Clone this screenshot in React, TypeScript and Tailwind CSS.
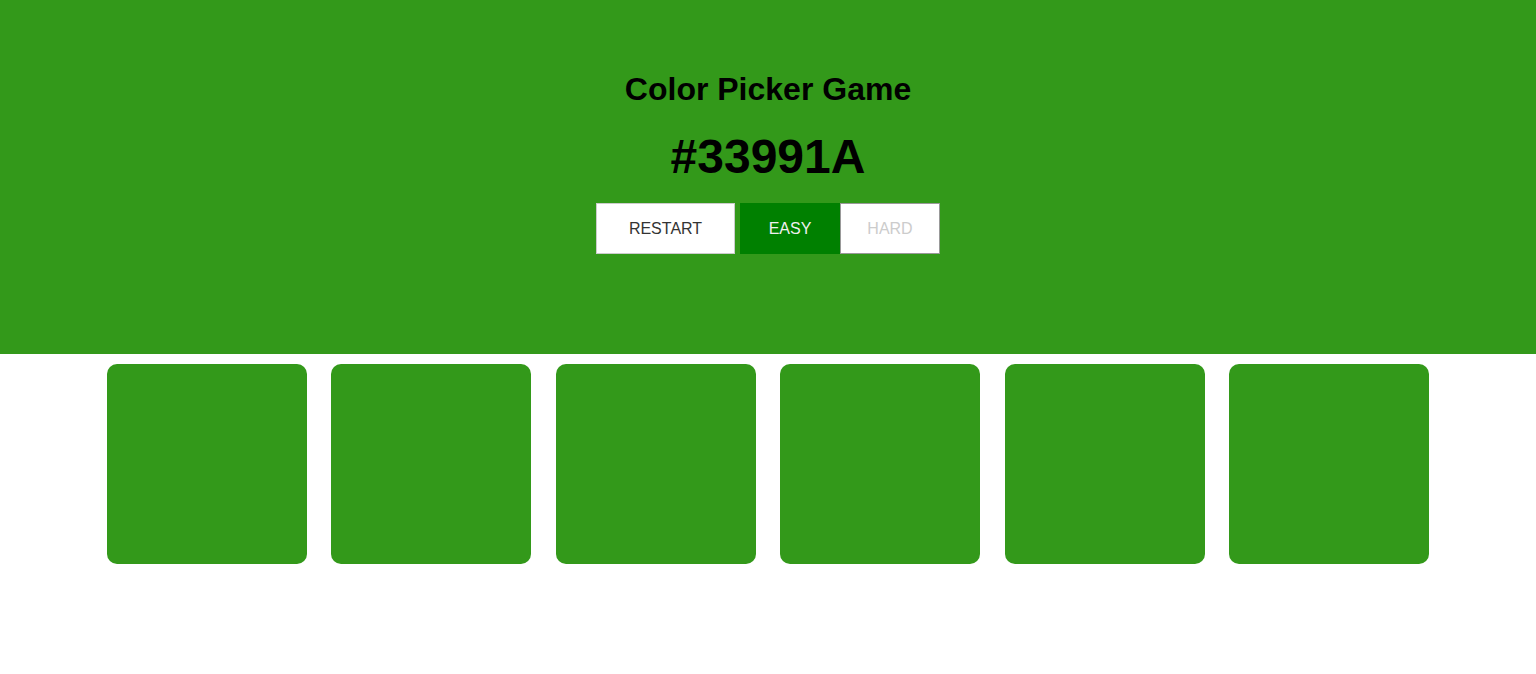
import React from "react";

export default function App() {
  const squares = [0, 1, 2, 3, 4, 5];
  return (
    <div className="min-h-[674px] bg-white" style={{ fontFamily: '"Liberation Sans", Arial, sans-serif' }}>
      <header className="h-[354px] bg-[#33991A] flex flex-col items-center pt-[71px]">
        <h1 className="text-[32px] leading-[37px] font-bold text-black">Color Picker Game</h1>
        <div className="mt-[21px] text-[48px] leading-[55px] font-bold text-black">#33991A</div>
        <div className="mt-[19px] flex items-center">
          <button className="h-[51px] w-[139px] bg-white border border-[#cccccc] text-[16px] text-[#333333] uppercase">
            RESTART
          </button>
          <div className="w-[5px]" />
          <button className="h-[51px] w-[100px] bg-[#008000] text-[16px] text-[#f0f0f0] uppercase">
            EASY
          </button>
          <button className="h-[51px] w-[100px] bg-white border border-[#999999] text-[16px] text-[#cccccc] uppercase">
            HARD
          </button>
        </div>
      </header>
      <main className="mt-[10px] flex justify-center gap-[24.4px]">
        {squares.map((i) => (
          <div key={i} className="w-[200px] h-[200px] rounded-[10px] bg-[#33991A]" />
        ))}
      </main>
    </div>
  );
}
